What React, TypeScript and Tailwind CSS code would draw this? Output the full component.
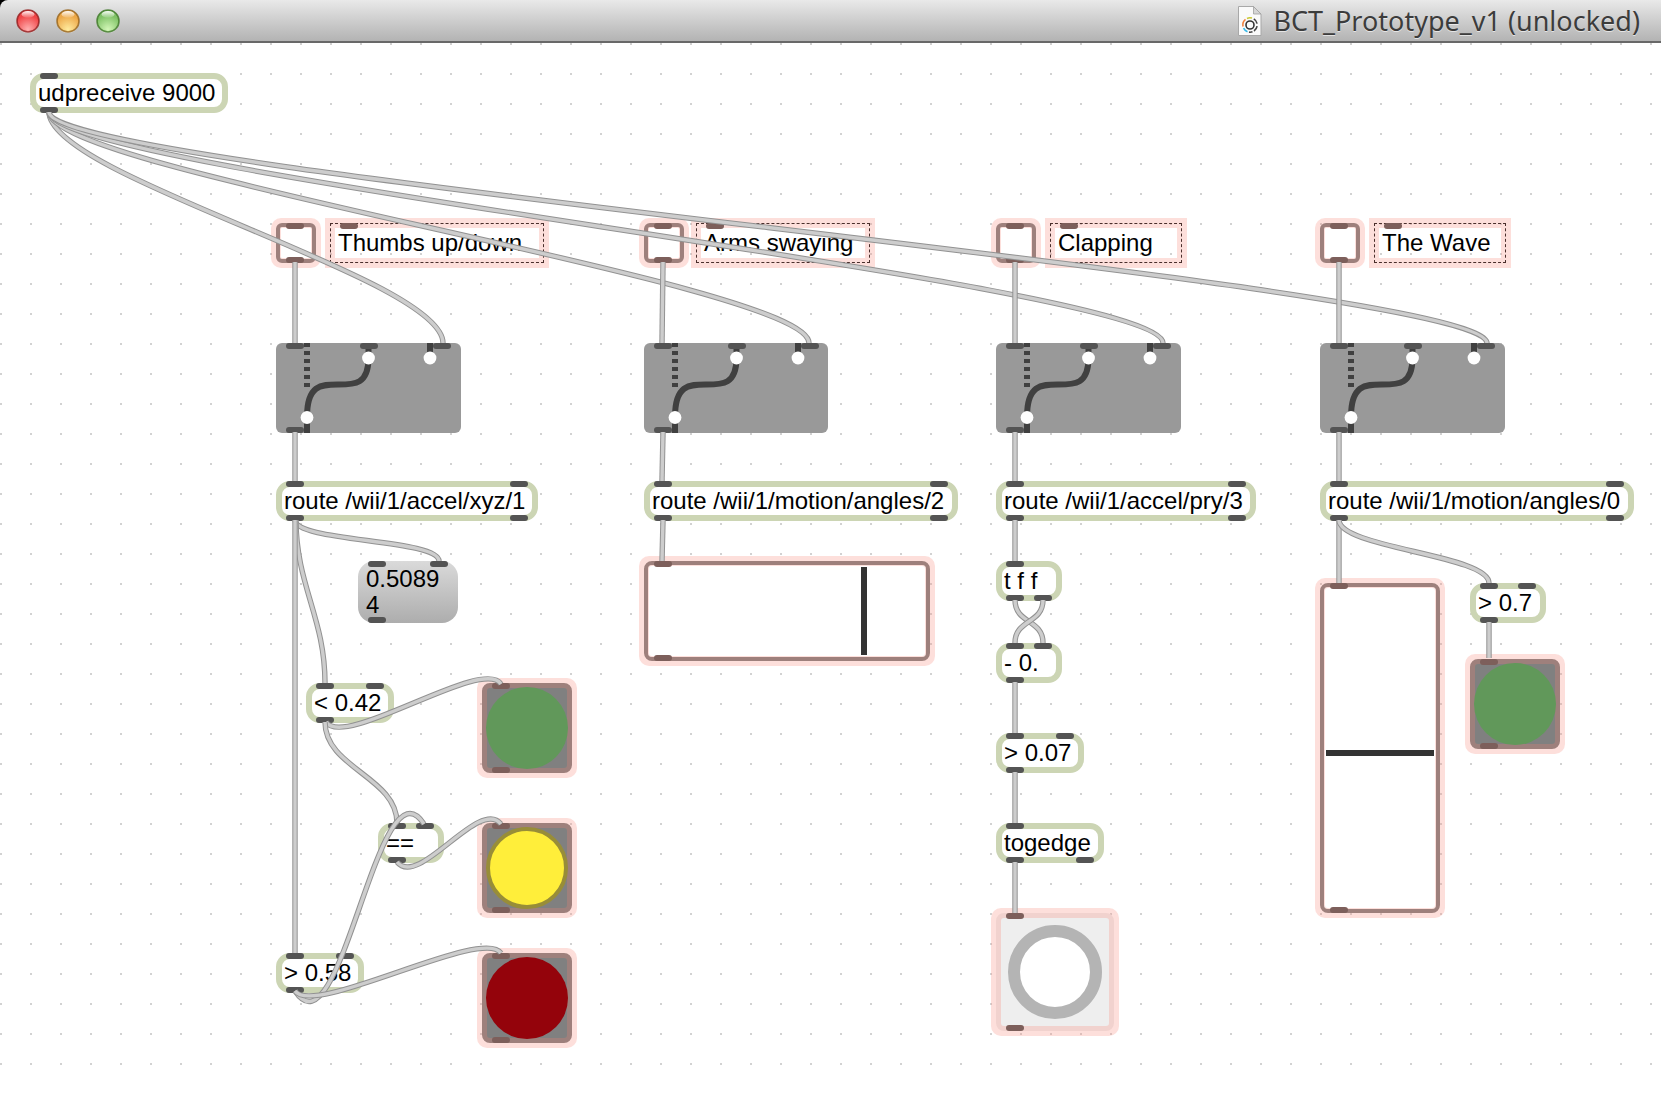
import React from "react";

const HEADER = 43;

const at = (x: number, y: number, w: number, h: number): React.CSSProperties => ({
  left: x,
  top: y - HEADER,
  width: w,
  height: h,
});

/** Inlets and outlets drawn along the top and bottom edges of a box. */
function Ports({ ins, outs, tone = "bg-[#545454]" }: { ins: number[]; outs: number[]; tone?: string }) {
  return (
    <>
      {ins.map((x) => (
        <span key={"i" + x} className={`absolute top-0 h-1.5 w-[18px] rounded-full ${tone}`} style={{ left: x }} />
      ))}
      {outs.map((x) => (
        <span key={"o" + x} className={`absolute bottom-0 h-1.5 w-[18px] rounded-full ${tone}`} style={{ left: x }} />
      ))}
    </>
  );
}

const WARM = "bg-[#7d5f5b]";

type Box = { text: string; x: number; y: number; w: number; ins: number[]; outs: number[] };

const boxes: Box[] = [
  { text: "udpreceive 9000", x: 30, y: 73, w: 198, ins: [10], outs: [10] },
  { text: "route /wii/1/accel/xyz/1", x: 276, y: 481, w: 262, ins: [10, 234], outs: [10, 234] },
  { text: "route /wii/1/motion/angles/2", x: 644, y: 481, w: 314, ins: [10, 286], outs: [10, 286] },
  { text: "route /wii/1/accel/pry/3", x: 996, y: 481, w: 260, ins: [10, 232], outs: [10, 232] },
  { text: "route /wii/1/motion/angles/0", x: 1320, y: 481, w: 314, ins: [10, 286], outs: [10, 286] },
  { text: "< 0.42", x: 306, y: 683, w: 88, ins: [10, 60], outs: [10] },
  { text: "==", x: 378, y: 823, w: 66, ins: [10, 38], outs: [10] },
  { text: "> 0.58", x: 276, y: 953, w: 88, ins: [10, 60], outs: [10] },
  { text: "t f f", x: 996, y: 561, w: 66, ins: [10], outs: [10, 38] },
  { text: "- 0.", x: 996, y: 643, w: 66, ins: [10, 38], outs: [10] },
  { text: "> 0.07", x: 996, y: 733, w: 88, ins: [10, 60], outs: [10] },
  { text: "togedge", x: 996, y: 823, w: 108, ins: [10], outs: [10, 80] },
  { text: "> 0.7", x: 1470, y: 583, w: 76, ins: [10, 48], outs: [10] },
];

function ObjectBox({ text, x, y, w, ins, outs }: Box) {
  return (
    <div className="absolute" style={at(x, y, w, 40)}>
      <div className="h-full rounded-[14px] border-6 border-[#ccd5b4] bg-white pl-0.5 leading-[27px] whitespace-nowrap">
        {text}
      </div>
      <Ports ins={ins} outs={outs} />
    </div>
  );
}

const gestures = [
  { label: "Thumbs up/down", x: 276, cx: 325, cw: 224, gw: 185 },
  { label: "Arms swaying", x: 644, cx: 691, cw: 184, gw: 184 },
  { label: "Clapping", x: 996, cx: 1045, cw: 142, gw: 185 },
  { label: "The Wave", x: 1320, cx: 1369, cw: 142, gw: 185 },
];

/** Pink halo shared by the interface objects. */
function Haloed({ x, y, w, h, children }: { x: number; y: number; w: number; h: number; children: React.ReactNode }) {
  return (
    <div className="absolute" style={at(x, y, w, h)}>
      <div className="pointer-events-none absolute -inset-[5px] rounded-[10px] bg-[rgba(250,150,135,0.3)]" />
      {children}
    </div>
  );
}

function Toggle({ label, x, id }: { label: string; x: number; id: string }) {
  return (
    <Haloed x={x} y={223} w={40} h={40}>
      <input
        id={id}
        type="checkbox"
        aria-label={label}
        className="relative block size-10 appearance-none rounded-md border-4 border-[#9e807c] bg-white shadow-[inset_0_0_0_1px_#fddfdb]"
      />
      <Ports ins={[10]} outs={[10]} tone={WARM} />
    </Haloed>
  );
}

function Comment({ text, x, w, id }: { text: string; x: number; w: number; id: string }) {
  return (
    <div className="absolute border-10 border-[rgba(250,150,135,0.3)]" style={at(x, 218, w, 50)}>
      <div className="absolute -inset-[5px] border border-dashed border-[#4a2f2c]" />
      <span className={`absolute -top-[5px] left-[5px] h-1.5 w-[18px] rounded-full ${WARM}`} />
      <label htmlFor={id} className="relative block pl-[3px] leading-[29px] whitespace-nowrap">
        {text}
      </label>
    </div>
  );
}

function Gate({ x, w }: { x: number; w: number }) {
  return (
    <div className="absolute rounded-md bg-[#999]" style={at(x, 343, w, 90)}>
      <svg className="absolute inset-0" width={w} height={90} fill="none" stroke="#404040" strokeWidth={6}>
        <path d="M31 0V44" strokeDasharray="4 4" />
        <path d="M92.5 0V15C92.5 42 78 41.5 61.5 41.5S31 42 31 74V90M154 0V15" />
        <g fill="#fff" stroke="none">
          <circle cx="92.5" cy="15" r="6.4" />
          <circle cx="154" cy="15" r="6.4" />
          <circle cx="31" cy="74.5" r="6.4" />
        </g>
      </svg>
      <Ports ins={[10, 84, 157]} outs={[10]} />
    </div>
  );
}

const leds = [
  { name: "Green light", x: 482, y: 683, dot: "bg-[#61985a]" },
  { name: "Yellow light", x: 482, y: 823, dot: "border-4 border-[#988d38] bg-[#ffee3a]" },
  { name: "Red light", x: 482, y: 953, dot: "bg-[#94030b]" },
  { name: "Wave light", x: 1470, y: 659, dot: "bg-[#61985a]" },
];

function Led({ name, x, y, dot }: { name: string; x: number; y: number; dot: string }) {
  return (
    <Haloed x={x} y={y} w={90} h={90}>
      <button
        aria-label={name}
        className="relative grid size-full place-items-center rounded-lg border-5 border-[#9e807c] bg-[#808080]"
      >
        <span className={`-m-px size-[82px] rounded-full ${dot}`} />
      </button>
      <Ports ins={[10]} outs={[10]} tone={WARM} />
    </Haloed>
  );
}

type P = [number, number];
const cord = (a: P, b: P, sag = 0, lean = 0) =>
  `M${a[0]} ${a[1]}C${a[0] + lean} ${a[1] + sag} ${b[0] - lean} ${b[1] - sag} ${b[0]} ${b[1]}`;

const cords = [
  cord([49, 112], [443, 343], 65),
  cord([49, 112], [809, 343], 60),
  cord([49, 112], [1163, 343], 60),
  cord([49, 112], [1487, 343], 60),
  cord([295, 262], [295, 343]),
  cord([663, 262], [662, 343]),
  cord([1015, 262], [1015, 343]),
  cord([1339, 262], [1339, 343]),
  cord([295, 432], [295, 481]),
  cord([663, 432], [662, 481]),
  cord([1015, 432], [1015, 481]),
  cord([1339, 432], [1339, 481]),
  cord([663, 520], [662, 561]),
  cord([295, 520], [439, 561], 22),
  cord([296, 520], [325, 683], 65),
  cord([295, 520], [295, 953]),
  cord([326, 722], [501, 684], 28, 18),
  cord([325, 722], [397, 823], 46),
  cord([397, 862], [501, 824], 27, 22),
  cord([295, 991], [424, 824], 70, 46),
  cord([295, 991], [501, 953], 27, 18),
  cord([1015, 520], [1015, 561]),
  cord([1015, 600], [1043, 643], 24),
  cord([1043, 600], [1015, 643], 24),
  cord([1015, 682], [1015, 733]),
  cord([1015, 772], [1015, 823]),
  cord([1015, 862], [1015, 913]),
  cord([1339, 520], [1339, 583]),
  cord([1339, 520], [1489, 583], 28),
  cord([1489, 622], [1489, 658]),
];

function Cords() {
  return (
    <svg className="pointer-events-none absolute inset-0 size-full" fill="none">
      <g transform={`translate(0 ${-HEADER})`}>
        {cords.map((d) => (
          <g key={d}>
            <path d={d} stroke="#929292" strokeWidth={5.4} />
            <path d={d} stroke="#cdcdcd" strokeWidth={3.4} />
          </g>
        ))}
      </g>
    </svg>
  );
}

const lights = [
  { name: "Close", c: ["#8f1d1d", "#f04446", "#ffb0b0"] },
  { name: "Minimize", c: ["#94611a", "#eda848", "#ffeb9e"] },
  { name: "Zoom", c: ["#3c7426", "#7fc266", "#d3f7b8"] },
];

function TitleBar() {
  return (
    <div className="bg-black">
      <header className="flex h-[43px] items-center justify-between rounded-tl-lg border-b-2 border-[#686868] bg-linear-to-b from-[#e9e9e9] to-[#b3b3b3] pr-[21px] pl-4">
        <div className="flex gap-4">
          {lights.map(({ name, c }, i) => (
            <button key={name} aria-label={name} className="block size-6">
              <svg viewBox="0 0 24 24" className="size-6">
                <defs>
                  <radialGradient id={"glow" + i} cx="50%" cy="88%" r="65%">
                    <stop offset="0" stopColor={c[2]} />
                    <stop offset="1" stopColor={c[1]} />
                  </radialGradient>
                  <linearGradient id={"gloss" + i} x1="0" y1="0" x2="0" y2="1">
                    <stop offset="0" stopColor="#fff" stopOpacity=".95" />
                    <stop offset="1" stopColor="#fff" stopOpacity=".1" />
                  </linearGradient>
                </defs>
                <circle cx="12" cy="12.6" r="11.4" fill="#fff" opacity=".5" />
                <circle cx="12" cy="12" r="11" fill={`url(#glow${i})`} stroke={c[0]} strokeOpacity=".8" strokeWidth="1.6" />
                <ellipse cx="12" cy="5.4" rx="6.4" ry="3.4" fill={`url(#gloss${i})`} />
              </svg>
            </button>
          ))}
        </div>
        <div className="flex items-center gap-[11px]">
          <svg viewBox="0 0 24 30" className="h-[30px] w-6">
            <path d="M.5 .5H15.5L23 8V29.5H.5Z" fill="#fafafa" stroke="#a8a8a8" />
            <path d="M15.5 .5V8H23Z" fill="#d5d5d5" stroke="#a0a0a0" strokeWidth=".8" />
            <circle cx="12" cy="19" r="4" fill="none" stroke="#333" strokeWidth="1.6" />
            <g fill="none" strokeWidth="1.6">
              <path d="M9 12.4A7.2 7.2 0 0 1 14 12.1" stroke="#c8c832" />
              <path d="M5 20.5A7.2 7.2 0 0 1 7.5 13.4" stroke="#f0803c" />
              <path d="M9.5 25.8A7.2 7.2 0 0 1 5.6 22.2" stroke="#35b8e8" />
              <path d="M15.8 12.9A7.2 7.2 0 0 1 19.1 17.6M19.1 20.2A7.2 7.2 0 0 1 16 25M14.5 25.8A7.2 7.2 0 0 1 11 26.1" stroke="#444" />
            </g>
          </svg>
          <h1 className="font-['Noto_Sans',sans-serif] text-[27px] leading-8 whitespace-nowrap text-[#3c3c3c] [text-shadow:0_1px_0_rgba(255,255,255,0.6)]">
            BCT_Prototype_v1 (unlocked)
          </h1>
        </div>
      </header>
    </div>
  );
}

export default function App() {
  return (
    <div className="flex min-h-screen flex-col bg-white font-['Liberation_Sans',Arial,sans-serif] text-2xl text-black">
      <TitleBar />
      <main className="relative min-h-[1010px] flex-1 overflow-hidden bg-[conic-gradient(from_270deg_at_2px_2px,#d2d2d2_90deg,transparent_0)] bg-size-[30px_30px]">
        {gestures.map((g, i) => (
          <React.Fragment key={g.label}>
            <Toggle label={g.label} x={g.x} id={"toggle" + i} />
            <Comment text={g.label} x={g.cx} w={g.cw} id={"toggle" + i} />
            <Gate x={g.x} w={g.gw} />
          </React.Fragment>
        ))}

        {boxes.map((b) => (
          <ObjectBox key={b.x + "-" + b.y} {...b} />
        ))}

        <div className="absolute" style={at(358, 561, 100, 62)}>
          <button className="flex size-full rounded-2xl bg-linear-to-b from-[#dadada] to-[#adadad] pt-[5px] pr-4 pl-2 text-left leading-[26px] break-all">
            0.50894
          </button>
          <Ports ins={[10, 72]} outs={[10]} />
        </div>

        <Haloed x={644} y={561} w={286} h={100}>
          <div className="relative size-full rounded-lg border-4 border-[#9e807c] bg-white p-0.5 shadow-[inset_0_0_0_1px_#fddfdb]">
            <input
              type="range"
              aria-label="Arms swaying angle"
              min={0}
              max={1000}
              defaultValue={787}
              className="block size-full appearance-none bg-transparent [&::-webkit-slider-thumb]:h-[88px] [&::-webkit-slider-thumb]:w-1.5 [&::-webkit-slider-thumb]:appearance-none [&::-webkit-slider-thumb]:bg-[#333]"
            />
          </div>
          <Ports ins={[10]} outs={[10]} tone={WARM} />
        </Haloed>

        <Haloed x={1320} y={583} w={120} h={330}>
          <div className="relative size-full rounded-lg border-4 border-[#9e807c] bg-white p-0.5 shadow-[inset_0_0_0_1px_#fddfdb]">
            <input
              type="range"
              aria-label="Wave angle"
              min={0}
              max={1000}
              defaultValue={484}
              className="block size-full appearance-none bg-transparent [direction:rtl] [writing-mode:vertical-lr] [&::-webkit-slider-thumb]:h-1.5 [&::-webkit-slider-thumb]:w-[108px] [&::-webkit-slider-thumb]:appearance-none [&::-webkit-slider-thumb]:bg-[#333]"
            />
          </div>
          <Ports ins={[10]} outs={[10]} tone={WARM} />
        </Haloed>

        {leds.map((l) => (
          <Led key={l.name} {...l} />
        ))}

        <Haloed x={996} y={913} w={118} h={118}>
          <button
            aria-label="Bang"
            className="relative grid size-full place-items-center rounded-lg border-5 border-[#f1d2ce] bg-[#eee]"
          >
            <span className="size-[94px] rounded-full border-12 border-[#b4b4b4] bg-white" />
          </button>
          <Ports ins={[10]} outs={[10]} tone={WARM} />
        </Haloed>

        <Cords />
      </main>
    </div>
  );
}
